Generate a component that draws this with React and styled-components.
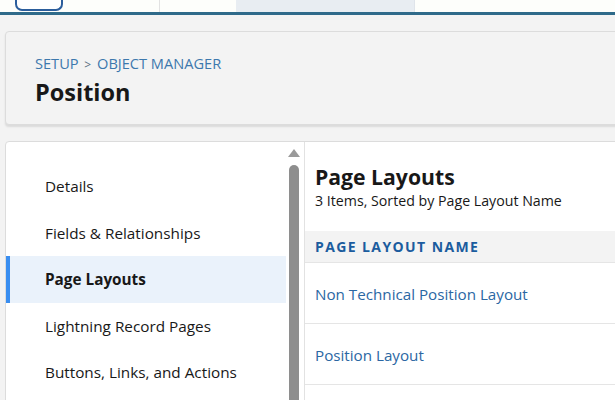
import React from 'react';
import styled, { createGlobalStyle } from 'styled-components';

const GlobalStyle = createGlobalStyle`
  html, body {
    margin: 0;
    padding: 0;
    background: #f3f3f3;
    font-family: "Open Sans", "Noto Sans", Arial, sans-serif;
    color: #181818;
  }
`;

const navItems = [
  'Details',
  'Fields & Relationships',
  'Page Layouts',
  'Lightning Record Pages',
  'Buttons, Links, and Actions',
];

const layouts = ['Non Technical Position Layout', 'Position Layout'];

const App = () => {
  return (
    <>
      <GlobalStyle />
      <Page>
        <TopStrip>
          <AppBadge />
          <StripSpacer $w={96} />
          <StripDivider />
          <StripSpacer $w={76} />
          <TabSlot />
        </TopStrip>

        <Body>
          <HeaderCard>
            <Breadcrumb>
              SETUP <Chevron>&gt;</Chevron> OBJECT MANAGER
            </Breadcrumb>
            <ObjectTitle>Position</ObjectTitle>
          </HeaderCard>

          <MainPanel>
            <Sidebar>
              <NavList>
                {navItems.map(item => (
                  <NavItem key={item} $active={item === 'Page Layouts'}>
                    {item}
                  </NavItem>
                ))}
              </NavList>
              <ScrollTrack>
                <ScrollArrow />
                <ScrollThumb />
              </ScrollTrack>
            </Sidebar>

            <Content>
              <SectionTitle>Page Layouts</SectionTitle>
              <SectionMeta>3 Items, Sorted by Page Layout Name</SectionMeta>
              <Table>
                <HeadRow>PAGE LAYOUT NAME</HeadRow>
                {layouts.map(name => (
                  <Row key={name}>
                    <RowLink>{name}</RowLink>
                  </Row>
                ))}
              </Table>
            </Content>
          </MainPanel>
        </Body>
      </Page>
    </>
  );
};

export default App;

const Page = styled.div`
  width: 615px;
  height: 400px;
  overflow: hidden;
`;

const TopStrip = styled.div`
  height: 12px;
  display: flex;
  align-items: stretch;
  background: #fdfefb;
  border-bottom: 3px solid #2f6a8a;
  padding-left: 15px;
`;

const AppBadge = styled.div`
  width: 44px;
  height: 9px;
  border: 2px solid #2b5d9c;
  border-top: none;
  border-radius: 0 0 7px 7px;
  background: #fff;
`;

const StripSpacer = styled.div`
  width: ${p => p.$w}px;
`;

const StripDivider = styled.div`
  width: 1px;
  background: #e2e2e2;
`;

const TabSlot = styled.div`
  width: 178px;
  background: #e8edf2;
  border-right: 1px solid #dfe4ea;
`;

const Body = styled.div`
  padding: 16px 0 0 5px;
`;

const HeaderCard = styled.div`
  height: 94px;
  margin-right: -12px;
  box-sizing: border-box;
  padding: 22px 30px 0 29px;
  background: #f3f3f3;
  border: 1px solid #dcdcdc;
  border-radius: 4px;
  box-shadow: 0 2px 2px rgba(0, 0, 0, 0.1);
`;

const Breadcrumb = styled.div`
  font-size: 14.6px;
  line-height: 18px;
  color: #3d78ad;
`;

const Chevron = styled.span`
  color: #5a6f82;
  font-size: 12px;
  margin: 0 2px;
`;

const ObjectTitle = styled.h1`
  margin: 3px 0 0;
  font-size: 23.5px;
  line-height: 30px;
  font-weight: 700;
  color: #181818;
`;

const MainPanel = styled.div`
  margin-top: 16px;
  margin-right: -12px;
  height: 300px;
  display: flex;
  background: #fff;
  border: 1px solid #dcdcdc;
  border-radius: 4px 0 0 0;
`;

const Sidebar = styled.div`
  display: flex;
  width: 299px;
  box-sizing: border-box;
  padding-right: 2px;
  border-right: 1px solid #e2e2e2;
`;

const NavList = styled.ul`
  list-style: none;
  margin: 0;
  padding: 21px 0 0;
  width: 281px;
`;

const NavItem = styled.li`
  height: 46.5px;
  display: flex;
  align-items: center;
  padding-left: ${p => (p.$active ? '35px' : '39px')};
  font-size: 15.3px;
  font-weight: ${p => (p.$active ? 700 : 400)};
  color: #181818;
  background: ${p => (p.$active ? '#eaf2fb' : 'transparent')};
  border-left: ${p => (p.$active ? '4px solid #3a8ef0' : 'none')};
`;

const ScrollTrack = styled.div`
  width: 16px;
  display: flex;
  flex-direction: column;
  align-items: center;
  padding-top: 7px;
`;

const ScrollArrow = styled.div`
  width: 0;
  height: 0;
  border-left: 6px solid transparent;
  border-right: 6px solid transparent;
  border-bottom: 8px solid #9a9a9a;
`;

const ScrollThumb = styled.div`
  margin-top: 8px;
  width: 10px;
  flex: 1;
  background: #8e8e8e;
  border-radius: 5px 5px 0 0;
`;

const Content = styled.div`
  flex: 1;
  padding-top: 22px;
`;

const SectionTitle = styled.h2`
  margin: 0 0 0 10px;
  font-size: 21.2px;
  line-height: 26px;
  font-weight: 700;
  color: #181818;
`;

const SectionMeta = styled.div`
  margin: 0 0 0 10px;
  font-size: 14.2px;
  line-height: 22px;
  color: #181818;
`;

const Table = styled.div`
  margin-top: 19px;
`;

const HeadRow = styled.div`
  height: 31px;
  display: flex;
  align-items: center;
  padding-left: 10px;
  background: #f3f3f3;
  border-bottom: 1px solid #e5e5e5;
  font-size: 14px;
  font-weight: 700;
  letter-spacing: 1.4px;
  color: #1b5c9e;
`;

const Row = styled.div`
  height: 61px;
  box-sizing: border-box;
  padding: 1px 0 0 10px;
  display: flex;
  align-items: center;
  border-bottom: 1px solid #e5e5e5;
`;

const RowLink = styled.a`
  font-size: 15.2px;
  color: #2b67a3;
  text-decoration: none;
  cursor: pointer;
`;
